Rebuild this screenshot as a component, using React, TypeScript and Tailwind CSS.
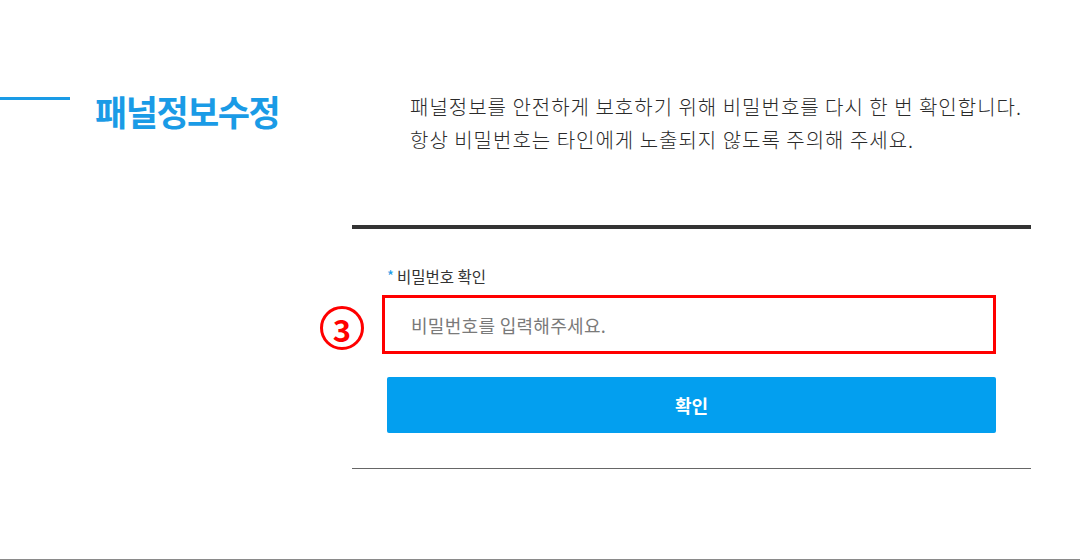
import React from 'react';

const font = { fontFamily: '"Noto Sans CJK KR", "Noto Sans", sans-serif' };

const App: React.FC = () => {
  return (
    <div
      className="w-[1080px] h-[560px] bg-white flex flex-col border-b border-[#8a8a8a] overflow-hidden"
      style={font}
    >
      <div className="flex pt-[90px]">
        {/* left heading */}
        <div className="w-[352px] flex items-start">
          <div className="w-[70px] h-[3px] bg-[#1a9be6] mt-[7px]" />
          <h1 className="ml-[25px] text-[35px] leading-[42px] font-bold tracking-[-1.5px] text-[#1a9be6]">
            패널정보수정
          </h1>
        </div>

        {/* right content */}
        <div className="w-[679px] flex flex-col">
          <div className="pl-[58px] text-[20px] leading-[33px] font-light text-[#2a2a2a] tracking-[1px]">
            <p>패널정보를 안전하게 보호하기 위해 비밀번호를 다시 한 번 확인합니다.</p>
            <p>항상 비밀번호는 타인에게 노출되지 않도록 주의해 주세요.</p>
          </div>

          <div className="mt-[69px] h-[4px] bg-[#333]" />

          <div className="pl-[35px] pr-[35px] pt-[37px]">
            <label className="flex items-center gap-[3px] text-[15.5px] leading-[20px] text-[#333]">
              <span className="text-[#1a9be6] text-[15px]">*</span>
              비밀번호 확인
            </label>

            <div className="relative mt-[9px] -ml-[5px]">
              <div className="absolute -left-[62px] top-[11px] w-[44px] h-[44px] rounded-full border-[3.5px] border-[#ff0000] flex items-center justify-center text-[#ff0000] text-[31px] font-bold leading-none">
                3
              </div>
              <input
                type="password"
                placeholder="비밀번호를 입력해주세요."
                className="w-[614px] h-[59px] border-[3px] border-[#ff0000] pl-[26px] text-[18px] tracking-[0.3px] text-[#333] placeholder:text-[#7a7a7a] outline-none"
                style={font}
              />
            </div>

            <button className="mt-[23px] w-[609px] h-[56px] rounded-[2px] bg-[#039fef] text-white text-[18px] font-bold">
              확인
            </button>
          </div>

          <div className="mt-[35px] h-px bg-[#666]" />
        </div>
      </div>
    </div>
  );
};

export default App;
